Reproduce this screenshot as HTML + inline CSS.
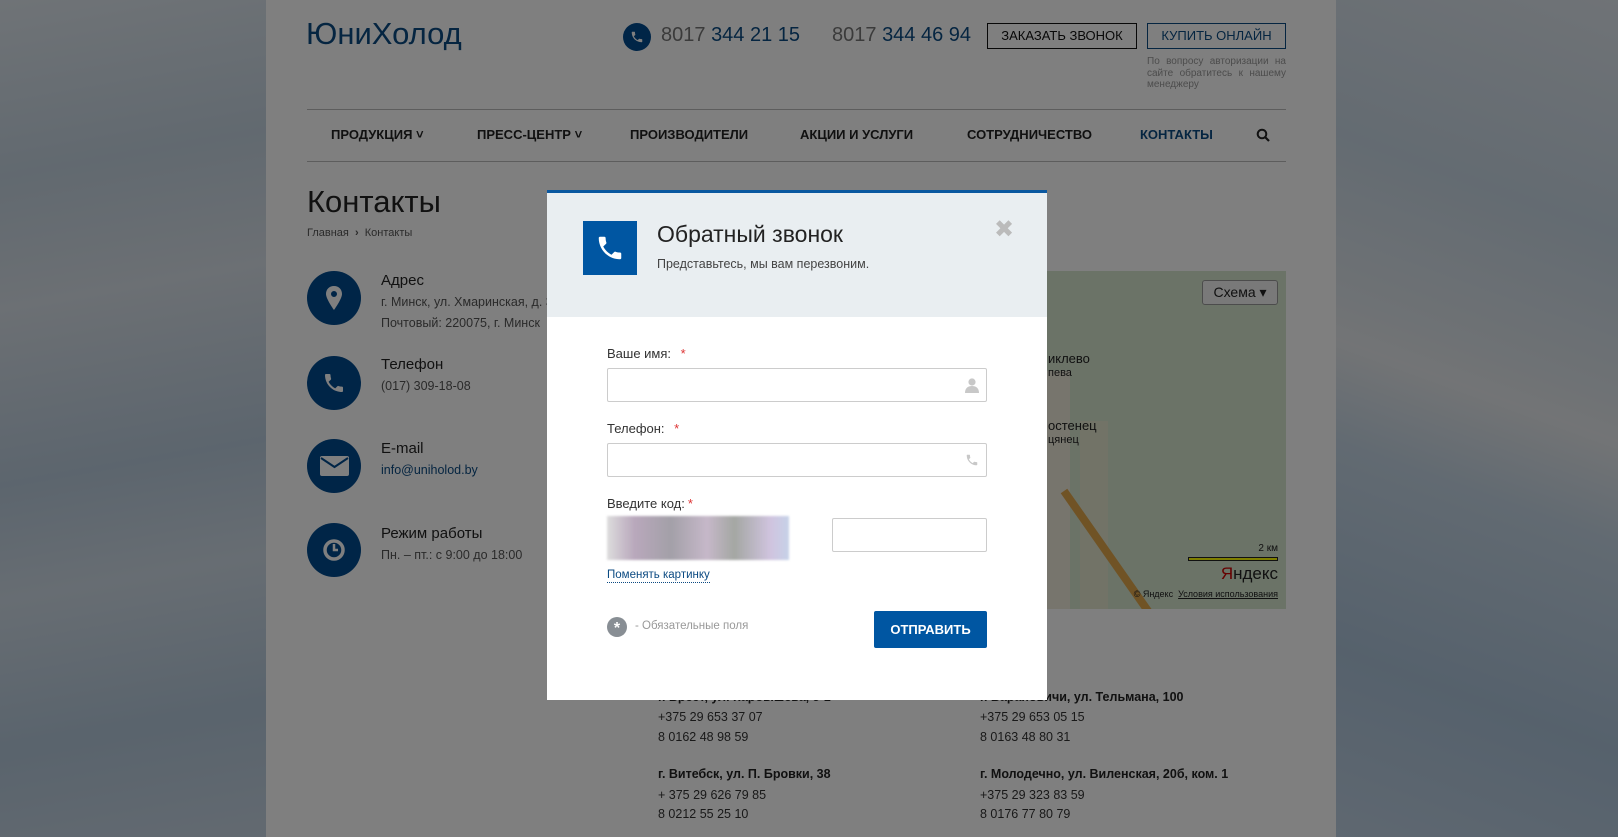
<!DOCTYPE html>
<html><head><meta charset="utf-8"><style>
*{box-sizing:border-box;margin:0;padding:0}
html,body{width:1618px;height:837px;overflow:hidden}
body{font-family:"Liberation Sans","DejaVu Sans",sans-serif;position:relative;background:#cdd9e4}
.side{position:absolute;top:0;height:837px}
.sl{left:0;width:266px;background:linear-gradient(170deg,#dfe7ee 0%,#c4d3e0 20%,#d8e0e8 35%,#b9cbdc 55%,#cfdbe6 68%,#b4c8da 85%,#c6d4e2 100%)}
.sr{left:1336px;width:282px;background:linear-gradient(200deg,#dfe6ed 0%,#c8d7e4 25%,#dde4ea 42%,#e6e9ec 47%,#c4d5e4 58%,#acc3d9 80%,#bed0e2 100%)}
.panel{position:absolute;left:266px;top:0;width:1070px;height:837px;background:#fff}
.a{position:absolute;white-space:nowrap}
.logo{left:306px;top:16px;font-size:31px;color:#0b4a82}
.ph{font-size:20px;color:#777}
.ph b{font-weight:normal;color:#0b4a82}
.circ{position:absolute;border-radius:50%;background:#004a8f}
.btn{position:absolute;height:26px;font-size:13px;text-align:center;line-height:24px}
.nav{font-size:13px;font-weight:bold;color:#222;top:127px}
.hr{position:absolute;left:307px;width:979px;height:1px;background:#bbb}
.t{font-size:15px;color:#222}
.s{font-size:12.5px;color:#555}
.ov{position:absolute;left:0;top:0;width:1618px;height:837px;background:rgba(0,0,0,.5)}
.modal{position:absolute;left:547px;top:190px;width:500px;height:510px;background:#fff;border-top:3px solid #0a58a0}
.mh{position:absolute;left:0;top:0;width:500px;height:124px;background:#e9eef1}
.inp{position:absolute;border:1px solid #ccc;border-radius:2px;background:#fff}
.lbl{font-size:13px;color:#333}
.lbl i{color:#d33;font-style:normal;margin-left:6px}
</style></head><body>
<div class="side sl"></div><div class="side sr"></div>
<div class="panel"></div>
<div class="a logo">ЮниХолод</div>
<div class="circ" style="left:623px;top:23px;width:28px;height:28px"></div>
<svg class="a" style="left:630px;top:30px" width="14" height="14" viewBox="0 0 24 24"><path fill="#fff" d="M6.6 10.8c1.4 2.8 3.8 5.1 6.6 6.6l2.2-2.2c.3-.3.7-.4 1-.2 1.1.4 2.3.6 3.6.6.6 0 1 .4 1 1V20c0 .6-.4 1-1 1C10.6 21 3 13.4 3 4c0-.6.4-1 1-1h3.5c.6 0 1 .4 1 1 0 1.3.2 2.5.6 3.6.1.3 0 .7-.2 1z"/></svg>
<div class="a ph" style="left:661px;top:24px">8017 <b>344 21 15</b></div>
<div class="a ph" style="left:832px;top:24px">8017 <b>344 46 94</b></div>
<div class="btn" style="left:987px;top:23px;width:150px;border:1px solid #111;color:#111">ЗАКАЗАТЬ ЗВОНОК</div>
<div class="btn" style="left:1147px;top:23px;width:139px;border:1px solid #0b4a82;color:#0b4a82">КУПИТЬ ОНЛАЙН</div>
<div class="a" style="left:1147px;top:56px;width:139px;font-size:10px;line-height:11.5px;color:#999;white-space:normal;text-align:justify;text-align-last:left">По вопросу авторизации на сайте обратитесь к нашему менеджеру</div>
<div class="hr" style="top:109px"></div><div class="hr" style="top:161px"></div>
<div class="a nav" style="left:331px">ПРОДУКЦИЯ ˅</div>
<div class="a nav" style="left:477px">ПРЕСС-ЦЕНТР ˅</div>
<div class="a nav" style="left:630px">ПРОИЗВОДИТЕЛИ</div>
<div class="a nav" style="left:800px">АКЦИИ И УСЛУГИ</div>
<div class="a nav" style="left:967px">СОТРУДНИЧЕСТВО</div>
<div class="a nav" style="left:1140px;color:#0b4a82">КОНТАКТЫ</div>
<svg class="a" style="left:1256px;top:128px" width="14" height="14" viewBox="0 0 14 14"><circle cx="6" cy="6" r="4.3" fill="none" stroke="#222" stroke-width="2"/><path d="M9 9l4 4" stroke="#222" stroke-width="2.2"/></svg>
<div class="a" style="left:307px;top:184px;font-size:31px;color:#222">Контакты</div>
<div class="a" style="left:307px;top:227px;font-size:11px;color:#555">Главная &nbsp;<b>›</b>&nbsp; Контакты</div>
<div class="circ" style="left:307px;top:271px;width:54px;height:54px"></div>
<div class="circ" style="left:307px;top:356px;width:54px;height:54px"></div>
<div class="circ" style="left:307px;top:439px;width:54px;height:54px"></div>
<div class="circ" style="left:307px;top:523px;width:54px;height:54px"></div>
<svg class="a" style="left:324px;top:286px" width="20" height="24" viewBox="0 0 20 24"><path fill="#fff" d="M10 0C5 0 2 3.5 2 8c0 5 8 16 8 16s8-11 8-16c0-4.5-3-8-8-8zm0 11a3 3 0 110-6 3 3 0 010 6z"/></svg>
<svg class="a" style="left:322px;top:371px" width="24" height="24" viewBox="0 0 24 24"><path fill="#fff" d="M6.6 10.8c1.4 2.8 3.8 5.1 6.6 6.6l2.2-2.2c.3-.3.7-.4 1-.2 1.1.4 2.3.6 3.6.6.6 0 1 .4 1 1V20c0 .6-.4 1-1 1C10.6 21 3 13.4 3 4c0-.6.4-1 1-1h3.5c.6 0 1 .4 1 1 0 1.3.2 2.5.6 3.6.1.3 0 .7-.2 1z"/></svg>
<svg class="a" style="left:320px;top:456px" width="29" height="20" viewBox="0 0 29 20"><rect x="0" y="0" width="29" height="20" rx="2" fill="#fff"/><path d="M1 2l13.5 9L28 2" fill="none" stroke="#004a8f" stroke-width="2"/></svg>
<svg class="a" style="left:322px;top:538px" width="24" height="24" viewBox="0 0 24 24"><circle cx="12" cy="12" r="9" fill="none" stroke="#fff" stroke-width="3.5"/><path d="M12 6v6h4" fill="none" stroke="#fff" stroke-width="2.5"/></svg>
<div class="a t" style="left:381px;top:272px">Адрес</div>
<div class="a s" style="left:381px;top:295px">г. Минск, ул. Хмаринская, д. 3</div>
<div class="a s" style="left:381px;top:316px">Почтовый: 220075, г. Минск</div>
<div class="a t" style="left:381px;top:356px">Телефон</div>
<div class="a s" style="left:381px;top:379px">(017) 309-18-08</div>
<div class="a t" style="left:381px;top:440px">E-mail</div>
<div class="a s" style="left:381px;top:463px;color:#0b4a82">info@uniholod.by</div>
<div class="a t" style="left:381px;top:525px">Режим работы</div>
<div class="a s" style="left:381px;top:548px">Пн. – пт.: с 9:00 до 18:00</div>
<div class="a" style="left:1000px;top:271px;width:286px;height:338px;background:#d6e6cf;overflow:hidden">
<div style="position:absolute;left:0;top:100px;width:70px;height:240px;background:#eeeadb"></div>
<div style="position:absolute;left:80px;top:150px;width:28px;height:200px;background:#e4e6cf"></div>
<div style="position:absolute;left:60px;top:220px;width:8px;height:230px;background:#e0a64b;transform:rotate(-35deg);transform-origin:top"></div>
<div style="position:absolute;right:8px;top:9px;width:76px;height:25px;border:1px solid #999;border-radius:3px;background:#f2f2f2;font-size:14px;line-height:23px;text-align:center;color:#222">Схема ▾</div>
<div style="position:absolute;left:48px;top:80px;font-size:13px;color:#222">иклево</div>
<div style="position:absolute;left:48px;top:96px;font-size:11px;color:#222">пева</div>
<div style="position:absolute;left:48px;top:147px;font-size:13px;color:#222">остенец</div>
<div style="position:absolute;left:48px;top:163px;font-size:11px;color:#222">цянец</div>
<div style="position:absolute;right:8px;top:272px;font-size:10px;color:#222">2 км</div>
<div style="position:absolute;right:8px;top:286px;width:90px;height:4px;background:#ff0;border:1px solid #222"></div>
<div style="position:absolute;right:8px;top:293px;font-size:17px;color:#c00">Я<span style="color:#222">ндекс</span></div>
<div style="position:absolute;right:8px;top:318px;font-size:9px;color:#222">© Яндекс &nbsp;<u>Условия использования</u></div>
</div>
<div class="a" style="left:658px;top:690px;font-size:12.5px;font-weight:bold;color:#222">г. Брест, ул. Карбышева, 5-1</div>
<div class="a s" style="left:658px;top:710px;color:#333">+375 29 653 37 07</div>
<div class="a s" style="left:658px;top:730px;color:#333">8 0162 48 98 59</div>
<div class="a" style="left:980px;top:690px;font-size:12.5px;font-weight:bold;color:#222">г. Барановичи, ул. Тельмана, 100</div>
<div class="a s" style="left:980px;top:710px;color:#333">+375 29 653 05 15</div>
<div class="a s" style="left:980px;top:730px;color:#333">8 0163 48 80 31</div>
<div class="a" style="left:658px;top:767px;font-size:12.5px;font-weight:bold;color:#222">г. Витебск, ул. П. Бровки, 38</div>
<div class="a s" style="left:658px;top:788px;color:#333">+ 375 29 626 79 85</div>
<div class="a s" style="left:658px;top:807px;color:#333">8 0212 55 25 10</div>
<div class="a" style="left:980px;top:767px;font-size:12.5px;font-weight:bold;color:#222">г. Молодечно, ул. Виленская, 20б, ком. 1</div>
<div class="a s" style="left:980px;top:788px;color:#333">+375 29 323 83 59</div>
<div class="a s" style="left:980px;top:807px;color:#333">8 0176 77 80 79</div>
<div class="ov"></div>
<div class="modal">
<div class="mh"></div>
<div class="a" style="left:36px;top:28px;width:54px;height:54px;background:#0056a2"></div>
<svg class="a" style="left:48px;top:40px" width="30" height="30" viewBox="0 0 24 24"><path fill="#fff" d="M6.6 10.8c1.4 2.8 3.8 5.1 6.6 6.6l2.2-2.2c.3-.3.7-.4 1-.2 1.1.4 2.3.6 3.6.6.6 0 1 .4 1 1V20c0 .6-.4 1-1 1C10.6 21 3 13.4 3 4c0-.6.4-1 1-1h3.5c.6 0 1 .4 1 1 0 1.3.2 2.5.6 3.6.1.3 0 .7-.2 1z"/></svg>
<div class="a" style="left:110px;top:28px;font-size:23px;color:#222">Обратный звонок</div>
<div class="a" style="left:110px;top:64px;font-size:12.5px;color:#444">Представьтесь, мы вам перезвоним.</div>
<div class="a" style="left:447px;top:22px;font-size:24px;font-weight:bold;color:#bbb">✖</div>
<div class="a lbl" style="left:60px;top:153px">Ваше имя: <i>*</i></div>
<div class="inp" style="left:60px;top:175px;width:380px;height:34px"></div>
<svg class="a" style="left:418px;top:185px" width="14" height="15" viewBox="0 0 14 15"><circle cx="7" cy="4" r="3.6" fill="#c8c8c8"/><path d="M0 15c0-5 3-7 7-7s7 2 7 7z" fill="#c8c8c8"/></svg>
<div class="a lbl" style="left:60px;top:228px">Телефон: <i>*</i></div>
<div class="inp" style="left:60px;top:250px;width:380px;height:34px"></div>
<svg class="a" style="left:418px;top:260px" width="14" height="14" viewBox="0 0 24 24"><path fill="#c8c8c8" d="M6.6 10.8c1.4 2.8 3.8 5.1 6.6 6.6l2.2-2.2c.3-.3.7-.4 1-.2 1.1.4 2.3.6 3.6.6.6 0 1 .4 1 1V20c0 .6-.4 1-1 1C10.6 21 3 13.4 3 4c0-.6.4-1 1-1h3.5c.6 0 1 .4 1 1 0 1.3.2 2.5.6 3.6.1.3 0 .7-.2 1z"/></svg>
<div class="a lbl" style="left:60px;top:303px">Введите код:<i style="margin-left:3px">*</i></div>
<div class="a" style="left:60px;top:323px;width:182px;height:44px;background:linear-gradient(90deg,#ddd 0%,#b9a8bc 15%,#a3a0a8 35%,#c6b8c9 55%,#a4a7a3 70%,#d0c4df 90%,#c6d2e8 100%);filter:blur(1px)"></div>
<div class="inp" style="left:285px;top:325px;width:155px;height:34px"></div>
<div class="a" style="left:60px;top:376px;font-size:11.5px;color:#0b4a82;border-bottom:1px dotted #0b4a82;line-height:13px">Поменять картинку</div>
<div class="a" style="left:60px;top:424px;width:20px;height:20px;border-radius:50%;background:#888e94;color:#fff;font-size:16px;line-height:24px;text-align:center;font-weight:bold">*</div>
<div class="a" style="left:88px;top:427px;font-size:11.5px;color:#999">- Обязательные поля</div>
<div class="a" style="left:327px;top:418px;width:113px;height:37px;background:#0056a2;border-radius:2px;color:#fff;font-size:13px;font-weight:bold;text-align:center;line-height:37px">ОТПРАВИТЬ</div>
</div>
</body></html>
